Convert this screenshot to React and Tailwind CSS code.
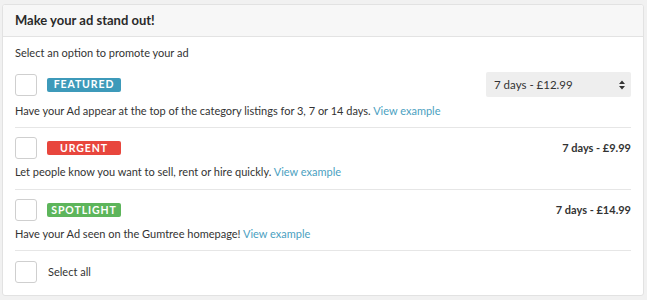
import React from "react";

const font = { fontFamily: "Lato, 'Noto Sans', sans-serif" };

function Box() {
  return <div className="w-[22px] h-[22px] shrink-0 rounded-[3px] border border-[#cfcfcf] bg-white" />;
}

function Badge({ label, color }) {
  return (
    <div className={`w-[74px] h-[14px] rounded-[2px] flex items-center justify-center text-white text-[10.5px] font-bold tracking-[0.9px] leading-none ${color}`}>
      {label}
    </div>
  );
}

function Link() {
  return <span className="text-[#4b9fc1]">View example</span>;
}

export default function App() {
  return (
    <div className="w-[647px] h-[300px] bg-[#f1f1f1] pt-[4px] pl-[2px] pr-[3px] text-[#333]" style={font}>
      <div className="h-[292px] bg-white border border-[#e2e2e2] rounded-[3px] flex flex-col overflow-hidden">
        <div className="h-[32px] shrink-0 bg-[#f7f7f7] border-b border-[#e3e3e3] flex items-center px-[12px]">
          <span className="text-[13px] font-bold text-[#2a2a2a]">Make your ad stand out!</span>
        </div>
        <div className="px-[12px] pr-[12px]">
          <div className="pt-[8px] text-[11px] leading-[16px]">Select an option to promote your ad</div>

          <div className="pt-[11px] pb-[8px] border-b border-[#e6e6e6]">
            <div className="flex items-center h-[25px]">
              <Box />
              <div className="ml-[10px]"><Badge label="FEATURED" color="bg-[#3d9aba]" /></div>
              <div className="ml-auto w-[145px] h-[25px] bg-[#eeeeee] rounded-[2px] flex items-center justify-between pl-[8px] pr-[6px] text-[11.5px]">
                <span>7 days - £12.99</span>
                <svg width="6" height="10" viewBox="0 0 6 10">
                  <path d="M0 4 L3 0.5 L6 4 Z M0 6 L3 9.5 L6 6 Z" fill="#333" />
                </svg>
              </div>
            </div>
            <div className="mt-[6px] text-[11px] leading-[16px]">
              Have your Ad appear at the top of the category listings for 3, 7 or 14 days. <Link />
            </div>
          </div>

          <div className="pt-[9px] pb-[9px] border-b border-[#e6e6e6]">
            <div className="flex items-center h-[22px]">
              <Box />
              <div className="ml-[10px]"><Badge label="URGENT" color="bg-[#e8463d]" /></div>
              <span className="ml-auto text-[11px] font-bold text-[#333]">7 days - £9.99</span>
            </div>
            <div className="mt-[5px] text-[11px] leading-[16px]">
              Let people know you want to sell, rent or hire quickly. <Link />
            </div>
          </div>

          <div className="pt-[9px] pb-[8px] border-b border-[#e6e6e6]">
            <div className="flex items-center h-[22px]">
              <Box />
              <div className="ml-[10px]"><Badge label="SPOTLIGHT" color="bg-[#5db55b]" /></div>
              <span className="ml-auto text-[11px] font-bold text-[#333]">7 days - £14.99</span>
            </div>
            <div className="mt-[5px] text-[11px] leading-[16px]">
              Have your Ad seen on the Gumtree homepage! <Link />
            </div>
          </div>

          <div className="pt-[10px] flex items-center">
            <Box />
            <span className="ml-[11px] text-[11px]">Select all</span>
          </div>
        </div>
      </div>
    </div>
  );
}
